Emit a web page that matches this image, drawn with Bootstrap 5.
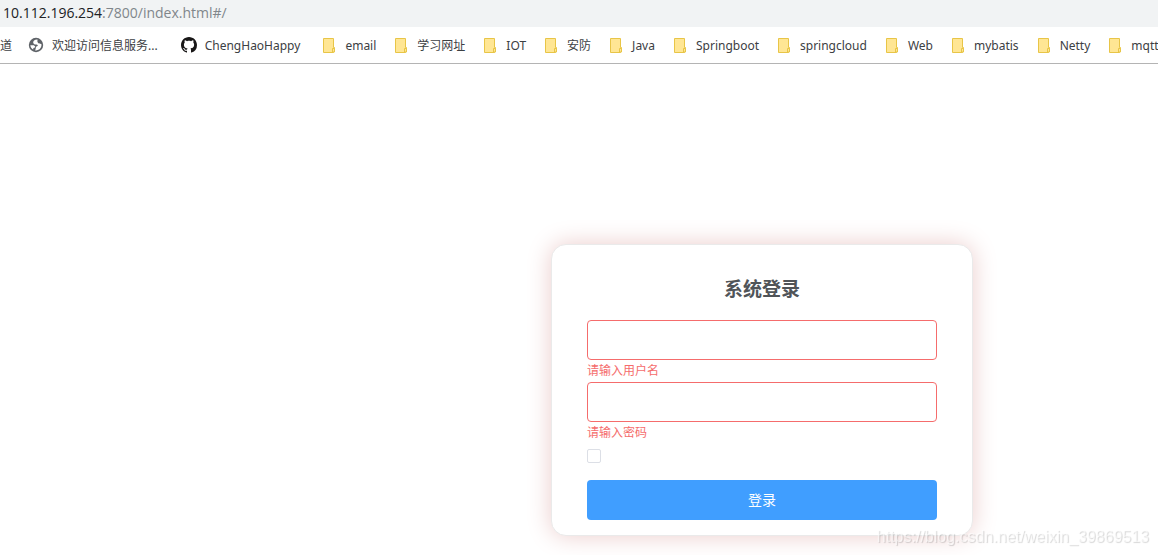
<!DOCTYPE html>
<html lang="zh-CN">
<head>
<meta charset="utf-8">
<meta name="viewport" content="width=device-width, initial-scale=1">
<title>系统登录</title>
<link href="https://cdn.jsdelivr.net/npm/bootstrap@5.3.0/dist/css/bootstrap.min.css" rel="stylesheet">
<style>
  body { font-family: "Noto Sans", "Noto Sans CJK SC", sans-serif; color: #3c4043; }
  .address { background: #f1f3f4; height: 27px; line-height: 26px; font-size: 14px; padding-left: 3px; color: #80868b; font-family: "Open Sans", "Noto Sans CJK SC", sans-serif; }
  .address span { color: #202124; }
  .bookmarks { height: 37px; border-bottom: 1px solid #b4b4b4; gap: 19px; font-size: 12px; overflow: hidden; }
  .bookmarks a { color: #3c4043; gap: 9px; }
  .bookmarks a span { padding-top: 2px; }
  .bookmarks svg { flex: none; }
  .bookmarks .site { gap: 8px; margin-right: 4px; }
  .bookmarks .cut { margin-right: -3px; }
  .stage { padding: 180px 0 19px 366px; }
  .login-box { width: 422px; padding: 35px 35px 15px; border: 1px solid #eaeaea; border-radius: 15px; box-shadow: 0 0 25px #ebcccb; background: #fff; }
  .login-box h1 { font-size: 19px; line-height: 24px; margin: -3px 0 19px; color: #505458; font-weight: 700; }
  .login-box .form-control { height: 40px; border: 1px solid #f56c6c; border-radius: 4px; }
  .error-note { display: block; color: #f56c6c; font-size: 12px; line-height: 22px; }
  .login-box .form-check-input { width: 14px; height: 14px; border: 1px solid #dcdfe6; border-radius: 2px; margin: 5px 0 17px; display: block; }
  .login-box .btn { height: 40px; border: 0; border-radius: 4px; background: #409eff; font-size: 14px; padding: 4px 12px 6px; }
  .watermark { right: 9px; bottom: 8px; font: 16px/20px "Liberation Sans", sans-serif; color: rgba(255,255,255,.6); text-shadow: 1px 1px 1px rgba(0,0,0,.16); }
</style>
</head>
<body class="min-vh-100 overflow-hidden">
<svg class="d-none" aria-hidden="true">
  <symbol id="folder" viewBox="0 0 13 15">
    <path d="M.5.5h10v9h1v4l-1 1H.5z" fill="#ffe694" stroke="#e8c547"/>
    <path d="M9.500 14V10.500h2v3.500z" fill="#ffe694" stroke="#e8c547"/>
  </symbol>
</svg>
<header>
  <div class="address text-nowrap"><span>10.112.196.254</span>:7800/index.html#/</div>
  <nav class="bookmarks d-flex align-items-center text-nowrap" aria-label="书签">
    <a href="#" class="cut d-flex text-decoration-none"><span>道</span></a>
    <a href="#" class="site d-flex align-items-center text-decoration-none">
      <svg width="16" height="16" viewBox="0 0 16 16"><circle cx="8" cy="8" r="7.200" fill="#5f6368"/><path d="M9.500 2.600C6.500 2.500 5 4 5.200 5.700c.2 1.400 1.500 1.800 3.300 1.900 1.200.1 1.300.7 1.200 1.300-1.300.2-2 .9-1.900 2.200l-.6 2.300c3 .4 5.600-1.400 6.200-4.300l.1-1.900-1.700-.8-1.500-.2-.9-1.400zM2.300 8.200h3.500l1.400 1.200-.3 1.200-1.500.4-.2 1.500C3.500 11.600 2.500 10.100 2.300 8.200z" fill="#fff"/></svg>
      <span>欢迎访问信息服务...</span></a>
    <a href="#" class="site d-flex align-items-center text-decoration-none">
      <svg width="16" height="16" viewBox="0 0 16 16" fill="#191717"><path d="M8 0C3.580 0 0 3.580 0 8c0 3.540 2.290 6.530 5.470 7.590.4.070.55-.17.55-.38 0-.19-.01-.82-.01-1.490-2.010.37-2.530-.49-2.690-.94-.09-.23-.48-.94-.82-1.130-.28-.15-.68-.52-.01-.53.63-.01 1.080.58 1.230.82.72 1.210 1.870.87 2.330.66.07-.52.28-.87.51-1.070-1.780-.2-3.640-.89-3.640-3.950 0-.87.31-1.590.82-2.150-.08-.2-.36-1.020.08-2.120 0 0 .67-.21 2.200.82.64-.18 1.320-.27 2-.27s1.360.09 2 .27c1.530-1.040 2.200-.82 2.200-.82.44 1.100.16 1.920.08 2.120.51.56.82 1.270.82 2.150 0 3.070-1.870 3.750-3.650 3.950.29.25.54.73.54 1.480 0 1.070-.01 1.930-.01 2.200 0 .21.15.46.55.38A8.010 8.010 0 0 0 16 8c0-4.420-3.580-8-8-8z"/></svg>
      <span>ChengHaoHappy</span></a>
    <a href="#" class="d-flex align-items-center text-decoration-none"><svg width="13" height="15"><use href="#folder"/></svg><span>email</span></a>
    <a href="#" class="d-flex align-items-center text-decoration-none"><svg width="13" height="15"><use href="#folder"/></svg><span>学习网址</span></a>
    <a href="#" class="d-flex align-items-center text-decoration-none"><svg width="13" height="15"><use href="#folder"/></svg><span>IOT</span></a>
    <a href="#" class="d-flex align-items-center text-decoration-none"><svg width="13" height="15"><use href="#folder"/></svg><span>安防</span></a>
    <a href="#" class="d-flex align-items-center text-decoration-none"><svg width="13" height="15"><use href="#folder"/></svg><span>Java</span></a>
    <a href="#" class="d-flex align-items-center text-decoration-none"><svg width="13" height="15"><use href="#folder"/></svg><span>Springboot</span></a>
    <a href="#" class="d-flex align-items-center text-decoration-none"><svg width="13" height="15"><use href="#folder"/></svg><span>springcloud</span></a>
    <a href="#" class="d-flex align-items-center text-decoration-none"><svg width="13" height="15"><use href="#folder"/></svg><span>Web</span></a>
    <a href="#" class="d-flex align-items-center text-decoration-none"><svg width="13" height="15"><use href="#folder"/></svg><span>mybatis</span></a>
    <a href="#" class="d-flex align-items-center text-decoration-none"><svg width="13" height="15"><use href="#folder"/></svg><span>Netty</span></a>
    <a href="#" class="d-flex align-items-center text-decoration-none"><svg width="13" height="15"><use href="#folder"/></svg><span>mqtt</span></a>
  </nav>
</header>
<main class="stage">
  <form class="login-box mx-auto" onsubmit="return false">
    <h1 class="text-center">系统登录</h1>
    <input type="text" class="form-control" id="user" aria-labelledby="user-note">
    <label class="error-note" id="user-note" for="user">请输入用户名</label>
    <input type="password" class="form-control" id="pass" aria-labelledby="pass-note">
    <label class="error-note" id="pass-note" for="pass">请输入密码</label>
    <input type="checkbox" class="form-check-input" aria-label="记住密码">
    <button type="submit" class="btn btn-primary w-100">登录</button>
  </form>
</main>
<div class="watermark position-fixed">https://blog.csdn.net/weixin_39869513</div>
<script src="https://cdn.jsdelivr.net/npm/bootstrap@5.3.0/dist/js/bootstrap.bundle.min.js"></script>
</body>
</html>
